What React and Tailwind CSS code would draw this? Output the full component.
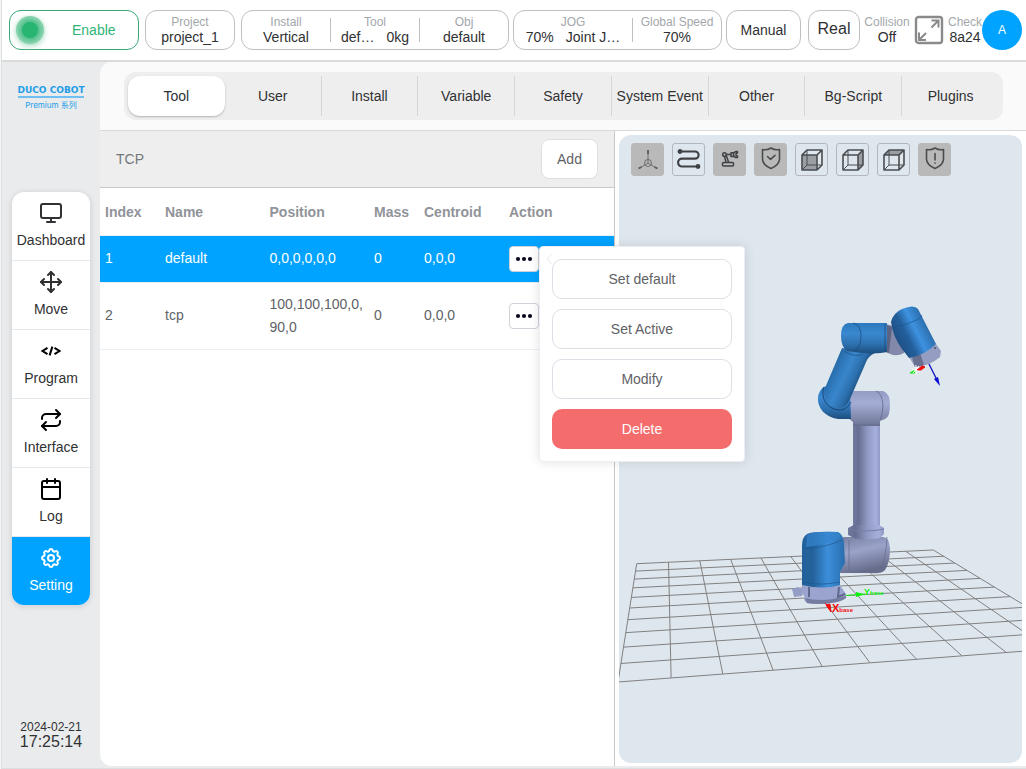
import clsx from 'clsx';
import { Calendar, Monitor, Move, Repeat } from 'lucide-react';
import { TbSettings } from 'react-icons/tb';

const CodeIcon = ({ className }) => (
  <svg viewBox="-2 -2 24 24" className={className} fill="none" stroke="#000" strokeWidth="2">
    <path d="M6.500 6.800 1.500 10l5 3.200M13.500 6.800l5 3.200-5 3.200M11.400 5.600 8.600 14.400" />
  </svg>
);

const navigation = [
  { name: 'Dashboard', icon: Monitor },
  { name: 'Move', icon: Move },
  { name: 'Program', icon: CodeIcon },
  { name: 'Interface', icon: Repeat, dark: true },
  { name: 'Log', icon: Calendar, dark: true },
  { name: 'Setting', icon: TbSettings, active: true },
];

const tabs = ['Tool', 'User', 'Install', 'Variable', 'Safety', 'System Event', 'Other', 'Bg-Script', 'Plugins'];

const tools = [
  { id: 1, name: 'default', position: '0,0,0,0,0,0', mass: '0', centroid: '0,0,0' },
  { id: 2, name: 'tcp', position: '100,100,100,0,90,0', mass: '0', centroid: '0,0,0' },
];

const Field = ({ label, children, className }) => (
  <div className={clsx('flex flex-col items-center justify-center whitespace-nowrap', className)}>
    <span className="text-xs leading-[14px] text-[#a3a7ab]">{label}</span>
    <span className="flex gap-3 text-sm leading-4 text-[#303133]">{children}</span>
  </div>
);

const Divider = () => <div className="h-6 w-px shrink-0 bg-[#bfbfbf]" />;

const Header = () => (
  <header className="flex items-center justify-between border-b-2 border-[#dadada] bg-white py-2.5 pr-1 pl-[7px]">
    <div className="flex h-10 flex-1 gap-1.5">
      <button className="flex w-[130px] shrink-0 items-center rounded-xl border border-[#3aa876] pl-1.5 text-sm text-[#2fb476]">
        <span className="flex h-7 w-7 items-center justify-center rounded-full bg-[#8fd5b3] shadow-[0_2px_6px_#a8dcc2]">
          <span className="h-4 w-4 rounded-full bg-[#27b571] shadow-[0_0_4px_3px_#4dbf88]" />
        </span>
        <span className="ml-7">Enable</span>
      </button>
      <Field label="Project" className="w-[90px] shrink-0 rounded-xl border border-[#bfbfbf]">project_1</Field>
      <div className="flex flex-1 items-center rounded-xl border border-[#bfbfbf]">
        <Field label="Install" className="flex-1">Vertical</Field>
        <Divider />
        <Field label="Tool" className="flex-1">
          <span>def…</span>
          <span>0kg</span>
        </Field>
        <Divider />
        <Field label="Obj" className="flex-1">default</Field>
      </div>
    </div>
    <div className="ml-1 flex h-10 shrink-0 items-center gap-1">
      <div className="flex h-10 w-[209px] items-center rounded-xl border border-[#bfbfbf]">
        <Field label="JOG" className="flex-1">
          <span>70%</span>
          <span>Joint J…</span>
        </Field>
        <Divider />
        <Field label="Global Speed" className="w-[88px]">70%</Field>
      </div>
      <button className="h-10 w-[75px] rounded-xl border border-[#bfbfbf] text-sm text-[#303133]">Manual</button>
      <button className="ml-[3px] h-10 w-[52px] rounded-xl border border-[#bfbfbf] pb-0.5 text-base leading-5 text-[#303133]">Real</button>
      <Field label="Collision" className="w-[46px]">Off</Field>
      <button aria-label="Full screen">
        <svg viewBox="0 0 30 30" className="h-[30px] w-[30px]" fill="none" stroke="#8a8a8a">
          <rect x="2" y="2" width="26" height="26" rx="2.500" strokeWidth="2.400" />
          <path d="M17.500 12.500 24 6M17.500 5.500h7v7M12 18l-6.500 6.500M5 17.500v7.500h7" strokeWidth="2" />
        </svg>
      </button>
      <div className="flex items-center">
        <Field label="Check" className="w-[34px]">8a24</Field>
        <button className="h-10 w-10 rounded-full bg-[#00a3ff] text-xs text-white">A</button>
      </div>
    </div>
  </header>
);

const Sidebar = () => (
  <aside className="flex w-[98px] shrink-0 flex-col items-center">
    {/* Logo */}
    <div className="mt-[22px] flex w-[66px] flex-col items-center text-[#1e9de8]">
      <span className="font-['DejaVu_Sans',sans-serif] text-[9px] leading-3 font-bold whitespace-nowrap">DUCO COBOT</span>
      <span className="h-0.5 w-full bg-[#6fbff2]" />
      <span className="font-[Inter,'Noto_Sans_CJK_SC',sans-serif] text-[8px] leading-[14px] whitespace-nowrap">Premium 系列</span>
    </div>

    {/* Navigation */}
    <nav className="mt-20 w-[78px] overflow-hidden rounded-xl bg-white shadow-[0_1px_6px_rgba(0,0,0,0.14)]">
      {navigation.map((item) => (
        <a
          key={item.name}
          href="#"
          className={clsx(
            'flex flex-col items-center gap-[5px] border-b border-[#e6e8ea] pt-[9px] pb-2.5 text-sm leading-5 last:border-b-0',
            item.active ? 'bg-[#00a3ff] text-white' : 'text-[#303133]'
          )}
        >
          <item.icon className={clsx('h-6 w-6', item.dark && 'text-black')} />
          <span>{item.name}</span>
        </a>
      ))}
    </nav>

    <div className="mt-auto mb-4 flex flex-col items-center text-[#303133]">
      <span className="text-xs leading-[14px]">2024-02-21</span>
      <span className="text-base leading-4">17:25:14</span>
    </div>
  </aside>
);

const ActionMenu = () => (
  <div className="absolute top-0 left-full z-20 flex w-[206px] flex-col gap-2.5 rounded border border-[#ebeef5] bg-white p-3 shadow-[0_0_12px_rgba(0,0,0,0.12)]">
    <svg viewBox="0 0 6 12" className="absolute top-1.5 left-1.5 h-3 w-1.5" fill="none" stroke="#e4e7ed">
      <path d="M5.500 1 1 6l4.500 5" />
    </svg>
    {['Set default', 'Set Active', 'Modify'].map((label) => (
      <button key={label} className="h-10 rounded-[10px] border border-[#dcdfe6] text-sm text-[#606266]">
        {label}
      </button>
    ))}
    <button className="h-10 rounded-[10px] bg-[#f56c6c] text-sm text-white">Delete</button>
  </div>
);

const ToolTable = () => (
  <table className="w-full table-fixed text-left text-sm leading-[23px] text-[#606266]">
    <colgroup>
      <col className="w-[60px]" />
      <col />
      <col />
      <col className="w-[50px]" />
      <col className="w-[85px]" />
      <col className="w-[110px]" />
    </colgroup>
    <thead>
      <tr className="h-[47px] border-b border-[#ebeef5] text-[#909399]">
        {['Index', 'Name', 'Position', 'Mass', 'Centroid', 'Action'].map((title) => (
          <th key={title} className="px-[5px] pt-0.5 font-bold">{title}</th>
        ))}
      </tr>
    </thead>
    <tbody>
      {tools.map((tool, i) => (
        <tr key={tool.id} className={clsx('border-b border-[#ebeef5]', i === 0 && 'bg-[#00a3ff] text-white')}>
          <td className="px-[5px] py-2.5">{tool.id}</td>
          <td className="px-[5px] py-2.5">{tool.name}</td>
          <td className="px-[5px] py-2.5 break-all">{tool.position}</td>
          <td className="px-[5px] py-2.5">{tool.mass}</td>
          <td className="px-[5px] py-2.5">{tool.centroid}</td>
          <td className="px-[5px] py-2.5">
            <div className="relative h-[26px] w-[30px]">
              <button
                aria-label="More"
                className="flex h-[26px] w-[30px] items-center justify-center rounded border border-[#cfd2d8] bg-white"
              >
                <svg viewBox="0 0 18 6" className="h-1.5 w-[18px]" fill="#0a0a1e">
                  <circle cx="3" cy="3" r="2.100" />
                  <circle cx="9" cy="3" r="2.100" />
                  <circle cx="15" cy="3" r="2.100" />
                </svg>
              </button>
              {i === 0 && <ActionMenu />}
            </div>
          </td>
        </tr>
      ))}
    </tbody>
  </table>
);

const cubeFaces = {
  front: 'M1 6h15v15H1z',
  right: 'M16 6l5-5v15l-5 5z',
  top: 'M1 6l5-5h15l-5 5z',
};

const CubeIcon = ({ face }) => (
  <svg viewBox="0 0 22 22" className="h-[22px] w-[22px]" fill="none" stroke="#4a4d50" strokeWidth="1.600" strokeLinejoin="round">
    <path d={cubeFaces[face]} fill="#9a9fa4" stroke="none" />
    <path d="M6 1v15h15M1 21l5-5" strokeWidth="1" />
    <path d="M1 6h15v15H1zM1 6l5-5h15l-5 5M21 1v15l-5 5" />
  </svg>
);

const ShieldIcon = ({ children }) => (
  <svg viewBox="0 0 22 24" className="mb-1 h-6 w-[22px]" fill="none" stroke="#4a4d50" strokeWidth="1.600" strokeLinejoin="round" strokeLinecap="round">
    <path d="M2.500 3.500C6 4.200 8.700 3.500 11 2c2.300 1.500 5 2.200 8.500 1.500V13c0 4.500-4 7.500-8.500 9.500C6.500 20.500 2.500 17.500 2.500 13z" />
    {children}
  </svg>
);

const viewTools = [
  {
    name: 'Coordinate axes',
    on: true,
    icon: (
      <svg viewBox="0 0 22 22" className="h-[22px] w-[22px]" fill="none" stroke="#5a5d60" strokeWidth="0.800">
        <circle cx="11" cy="14" r="3.500" />
        <path d="M11 1v13M11 14l-9 5.500M11 14l9 5.500" />
        <path d="M11 1v4M1.500 19.500l3-1.500M20.500 19.500l-3-1.500" strokeWidth="1.800" />
      </svg>
    ),
  },
  {
    name: 'Trajectory',
    icon: (
      <svg viewBox="0 0 24 22" className="mb-0.5 h-[22px] w-6" fill="none" stroke="#3f4245" strokeWidth="2.200">
        <path d="M3 3.500h15a3.600 3.600 0 0 1 0 7.200H5a3.900 3.900 0 0 0 0 7.800H21" />
        <circle cx="3" cy="3.500" r="1.300" fill="#3f4245" />
        <circle cx="21" cy="18.500" r="1.300" fill="#3f4245" />
      </svg>
    ),
  },
  {
    name: 'Robot model',
    on: true,
    icon: (
      <svg viewBox="0 0 20 20" className="mb-0.5 h-5 w-5" fill="none" stroke="#3f4245" strokeWidth="1.500" strokeLinejoin="round">
        <circle cx="4.500" cy="5.500" r="1.800" />
        <path d="M6.500 5.500H11M4.500 7.500 6 13M6.500 7l2 6" />
        <rect x="2.500" y="13.500" width="11" height="3.500" rx="1" />
        <path d="M11 3.800h2.500v3.600H11zM17.500 2.500c-2.500-.3-4 1-4 3s1.500 3.400 4 3V7l-1.500-.5v-2l1.500-.5z" />
      </svg>
    ),
  },
  {
    name: 'Safety plane',
    on: true,
    icon: (
      <ShieldIcon>
        <path d="m7.500 10.500 3 2.800 4.500-4" />
      </ShieldIcon>
    ),
  },
  { name: 'Front view', icon: <CubeIcon face="front" /> },
  { name: 'Right view', icon: <CubeIcon face="right" /> },
  { name: 'Top view', icon: <CubeIcon face="top" /> },
  {
    name: 'Collision warning',
    on: true,
    icon: (
      <ShieldIcon>
        <path d="M11 7.500v6.500M11 17v.2" />
      </ShieldIcon>
    ),
  },
];

// Floor corners on screen: back left, back right, front right, front left
const floor = [[636.7, 563.7], [933.3, 550], [1091.7, 646], [618, 682]];

// Maps a point of the unit square onto the floor in perspective
const project = (u, v) => {
  const [[x0, y0], [x1, y1], [x2, y2], [x3, y3]] = floor;
  const dx1 = x1 - x2;
  const dx2 = x3 - x2;
  const dy1 = y1 - y2;
  const dy2 = y3 - y2;
  const sx = x0 - x1 + x2 - x3;
  const sy = y0 - y1 + y2 - y3;
  const det = dx1 * dy2 - dx2 * dy1;
  const g = (sx * dy2 - dx2 * sy) / det;
  const h = (dx1 * sy - sx * dy1) / det;
  const w = g * u + h * v + 1;
  const x = ((x1 - x0 + g * x1) * u + (x3 - x0 + h * x3) * v + x0) / w;
  const y = ((y1 - y0 + g * y1) * u + (y3 - y0 + h * y3) * v + y0) / w;
  return `${x} ${y}`;
};

const gridPath = Array.from({ length: 11 }, (_, i) => i / 10)
  .map((t) => `M${project(t, 0)}L${project(t, 1)}M${project(0, t)}L${project(1, t)}`)
  .join('');

const RobotScene = () => (
  <svg viewBox="619 135 403 628" preserveAspectRatio="xMidYMid slice" className="absolute inset-0 h-full w-full">
    <defs>
      <linearGradient id="greyTube">
        <stop offset="0" stopColor="#717a9f" />
        <stop offset="0.200" stopColor="#666e92" />
        <stop offset="0.550" stopColor="#929bc4" />
        <stop offset="0.850" stopColor="#a6b0dc" />
        <stop offset="1" stopColor="#8f99c4" />
      </linearGradient>
      <linearGradient id="greyJoint" x1="0" y1="0" x2="0" y2="1">
        <stop offset="0" stopColor="#949cc4" />
        <stop offset="0.350" stopColor="#a4add6" />
        <stop offset="1" stopColor="#6d7494" />
      </linearGradient>
      <linearGradient id="greyBase" x1="0" y1="0" x2="0.300" y2="1">
        <stop offset="0" stopColor="#777e9f" />
        <stop offset="0.450" stopColor="#9ba3ca" />
        <stop offset="1" stopColor="#666c8a" />
      </linearGradient>
      <linearGradient id="blueBar" x1="0" y1="0" x2="0" y2="1">
        <stop offset="0" stopColor="#2b78bd" />
        <stop offset="0.350" stopColor="#3a88d0" />
        <stop offset="0.700" stopColor="#2d70ae" />
        <stop offset="1" stopColor="#1d4e7e" />
      </linearGradient>
      <linearGradient id="blueArm" gradientUnits="userSpaceOnUse" x1="832" y1="368" x2="861" y2="382">
        <stop offset="0" stopColor="#266aa8" />
        <stop offset="0.450" stopColor="#3986cc" />
        <stop offset="0.750" stopColor="#2c70ae" />
        <stop offset="1" stopColor="#1c4b79" />
      </linearGradient>
      <linearGradient id="blueWrist" gradientUnits="userSpaceOnUse" x1="898" y1="340" x2="928" y2="325">
        <stop offset="0" stopColor="#1f5289" />
        <stop offset="0.300" stopColor="#235f9c" />
        <stop offset="0.600" stopColor="#3d92e0" />
        <stop offset="1" stopColor="#296aa8" />
      </linearGradient>
      <linearGradient id="blueBase">
        <stop offset="0" stopColor="#22629c" />
        <stop offset="0.250" stopColor="#23619a" />
        <stop offset="0.600" stopColor="#3c8fdc" />
        <stop offset="1" stopColor="#2a6dac" />
      </linearGradient>
    </defs>

    {/* Floor */}
    <path d={gridPath} fill="none" stroke="#808080" strokeWidth="1" />

    {/* Base */}
    <path d="M792 589l6-2 4 2v7l-8 1z" fill="#949dc6" />
    <path d="M802 585h38l6 9v4q-5 4-15 5-12 2-24 0l-3-3 1-3-4-4z" fill="#9aa4cf" />
    <path d="M805 598q18 5 41-2v2q-5 4-15 5-12 2-24 0z" fill="#747d9f" />
    <path d="M809 587v10M839 587l-1 10 7-3" fill="none" stroke="#5f678a" strokeWidth="2" />
    <path d="M843 537H882Q889 536 890 548 890 563 885 570 881 574 872 573H840z" fill="url(#greyBase)" />
    <path d="M887 537q-1 22-7 34M849 540v31" fill="none" stroke="#656c8d" strokeWidth="0.700" />
    <path d="M802 546q0-9 5-12 6-3 31-2 5 2 6 11l1 20-5 9v13q-17 5-38 0z" fill="url(#blueBase)" />
    <path d="M807 535q6-4 31-3 3 2 3 5-18 8-35 10z" fill="#3585cd" opacity="0.700" />
    <path d="M804 549q24-2 38-9M802 582q19 4 38 0" fill="none" stroke="#1d568c" strokeWidth="0.700" />

    {/* Lower arm */}
    <path d="M853 424h27v106h-27z" fill="url(#greyTube)" />
    <path d="M854 525h25l5 3v6l-4 4q-13 3-26 0l-6-3v-7z" fill="url(#greyTube)" />
    <path d="M848 529q18 4 36 0" fill="none" stroke="#757da3" />
    <path d="M849 391h34q7 2 7 14 0 12-5 14l-5 2v5h-27v-4l-6-5z" fill="url(#greyJoint)" />
    <path d="M853 425h27M876 391q6 2 7 14 0 9-3 15" fill="none" stroke="#626a8c" strokeWidth="0.800" />

    {/* Elbow and upper arm */}
    <path d="M842 391h8l1 28h-13c-13-2-21-11-20-22 1-6 4-10 9-11z" fill="url(#blueBar)" />
    <path d="M886 324l7 2 12 19-1 8q-7 4-14 1l-4-2z" fill="#8289aa" />
    <path d="M886 325l6 2-3 26-3-1z" fill="#5d6383" />
    <path d="M842 348l-17 40c-3 10 3 20 14 20 5 0 9-4 11-9l17-39q3-5 8-7z" fill="url(#blueArm)" />
    <path d="M824 387c-4 11 3 22 15 23 6 0 9-3 12-8" fill="none" stroke="#184674" strokeWidth="1" />
    <path d="M848 323h39v29q-8 2-24 1l-16-2q-6-4-6-15 0-12 7-13z" fill="url(#blueBar)" />
    <path d="M853 323q8 2 8 13 0 12-7 15M885 324v28" fill="none" stroke="#174675" strokeWidth="0.700" />
    <path d="M844 351q11 7 19 3" fill="none" stroke="#1b4f83" strokeWidth="0.700" />

    {/* Wrist */}
    <path d="M909 357l27-13 5 7-1 6q-10 9-25 10z" fill="#959dc2" />
    <path d="M912 357l3 10q5 0 9-2l-4-12z" fill="#686f91" />
    <path d="M891 322q2-9 11-13 12-5 16 0l18 35q-11 11-27 14l-7-9q-9-12-11-27z" fill="url(#blueWrist)" />
    <path d="M892 326q10 1 17-3 12-4 13-8" fill="none" stroke="#1d558c" strokeWidth="0.700" />
    <circle cx="935" cy="348" r="1" fill="#4d5474" />

    {/* Tool frame */}
    <path d="M917 370l5-4 3 1-4 3z" fill="#f20d0d" stroke="#f20d0d" />
    <path d="M910 373l5-3v3z" fill="#16e616" stroke="#16e616" />
    <path d="M916 365v10M912 369l8 3M919 366l-6 7" stroke="#fff" strokeWidth="1" />
    <path d="M929 364l8 16" stroke="#1818c8" strokeWidth="1.400" />
    <path d="M934 379l4-2 2 9z" fill="#0a0ad2" />

    {/* Base frame */}
    <path d="M846 595.500l20-1.500" stroke="#0ef00e" />
    <path d="M856 592l9 2.300-9 2.700z" fill="#0ef00e" />
    <path d="M825 603l4 5" stroke="#f20d0d" />
    <path d="M826 605l4-1 1 8z" fill="#f20d0d" stroke="#f20d0d" />
    <text x="864" y="595" className="font-['Liberation_Sans',sans-serif] text-[9px] font-bold" fill="#0ef00e">
      Y<tspan className="text-[6px]">base</tspan>
    </text>
    <text x="832" y="612" className="font-['Liberation_Sans',sans-serif] text-[11px] font-bold" fill="#f20d0d">
      X<tspan className="text-[6px]">base</tspan>
    </text>
  </svg>
);

const Viewer = () => (
  <section className="p-1 pb-[3px]">
    <div className="relative h-full overflow-hidden rounded-xl bg-[#dfe7ee] px-3 py-2">
      <RobotScene />
      <div className="relative flex gap-2">
        {viewTools.map((tool) => (
          <button
            key={tool.name}
            aria-label={tool.name}
            className={clsx(
              'flex h-[33px] w-[33px] items-center justify-center rounded-[3px] border',
              tool.on ? 'border-[#b9b9b9] bg-[#b9b9b9]' : 'border-[#b4b8bc]'
            )}
          >
            {tool.icon}
          </button>
        ))}
      </div>
    </div>
  </section>
);

const App = () => {
  return (
    <div className="flex min-h-screen bg-[#f4f6f7] pl-px font-['Liberation_Sans',Arial,sans-serif]">
      <div className="flex flex-1 flex-col border-b border-l border-[#dcdfe0] bg-[#e9ebec]">
        <Header />
        <div className="flex flex-1 pb-0.5">
          <Sidebar />
          <main className="flex min-w-0 flex-1 flex-col overflow-hidden rounded-l-xl bg-white">
            {/* Tabs */}
            <div className="border-b border-[#d9d9d9] bg-[#fafafa] py-2.5 pr-[23px] pl-6">
              <div className="grid h-12 grid-cols-9 rounded-xl bg-[#eeeeee] p-1">
                {tabs.map((tab, i) => (
                  <button
                    key={tab}
                    className={clsx(
                      'text-sm whitespace-nowrap text-[#303133]',
                      i === 0 && 'rounded-xl bg-white shadow-[0_1px_2px_rgba(0,0,0,0.25)]',
                      i > 0 && i < tabs.length - 1 && 'border-r border-[#d6d6d6]'
                    )}
                  >
                    {tab}
                  </button>
                ))}
              </div>
            </div>

            <div className="grid flex-1 grid-cols-[515fr_411fr]">
              <section className="relative z-10 border-r border-[#c8c8c8]">
                <div className="flex items-center justify-between border-b border-[#c8c8c8] bg-[#eeeeee] px-4 py-2">
                  <h2 className="text-sm text-[#73767a]">TCP</h2>
                  <button className="h-10 w-[57px] rounded-lg border border-[#dcdfe6] bg-white text-sm text-[#606266]">Add</button>
                </div>
                <ToolTable />
              </section>
              <Viewer />
            </div>
          </main>
        </div>
      </div>
    </div>
  );
};

export default App;
